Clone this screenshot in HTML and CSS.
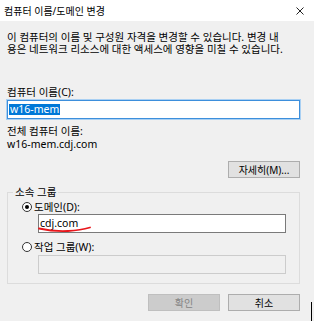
FILE: index.html
```html
<!DOCTYPE html>
<html lang="ko">
<head>
<meta charset="utf-8">
<title>컴퓨터 이름/도메인 변경</title>
<link rel="stylesheet" href="styles.css">
</head>
<body>
<div class="dialog">
  <div class="titlebar">
    <span class="title">컴퓨터 이름/도메인 변경</span>
    <svg class="close" width="8" height="8" viewBox="0 0 8 8"><path d="M0.5 0.5 L7.5 7.5 M7.5 0.5 L0.5 7.5" stroke="#222" stroke-width="1" fill="none"/></svg>
  </div>
  <div class="content">
    <div class="desc">
      <div class="desc-line">이 컴퓨터의 이름 및 구성원 자격을 변경할 수 있습니다. 변경 내</div>
      <div class="desc-line">용은 네트워크 리소스에 대한 액세스에 영향을 미칠 수 있습니다.</div>
    </div>
    <div class="label label-name">컴퓨터 이름(C):</div>
    <div class="textbox focused"><span class="sel">w16-mem</span></div>
    <div class="label label-full">전체 컴퓨터 이름:</div>
    <div class="label label-fullval">w16-mem.cdj.com</div>
    <button class="btn btn-more">자세히(M)...</button>
    <fieldset class="group">
      <legend class="legend">소속 그룹</legend>
      <div class="group-body">
        <div class="radio-row"><span class="radio checked"></span><span>도메인(D):</span></div>
        <div class="textbox indent"><span>cdj.com</span></div>
        <div class="radio-row radio-row-2"><span class="radio"></span><span>작업 그룹(W):</span></div>
        <div class="textbox indent disabled"></div>
      </div>
    </fieldset>
    <div class="buttons">
      <button class="btn disabled-btn">확인</button>
      <button class="btn">취소</button>
    </div>
  </div>
  <svg class="scribble" width="54" height="8" viewBox="0 0 54 8"><path d="M1 3.5 C10 5.5 20 6.5 30 6 C38 5.5 45 4.5 52 2.5" stroke="#e8161b" stroke-width="1.8" fill="none" stroke-linecap="round"/></svg>
  <div class="cursor"></div>
</div>
</body>
</html>
```
FILE: styles.css
```css
* { box-sizing: border-box; }
html, body { margin: 0; padding: 0; }
body {
  width: 314px;
  height: 321px;
  overflow: hidden;
  background: #f0f0f0;
  font-family: "Noto Sans", "Noto Sans CJK KR", sans-serif;
  font-size: 10.5px;
  color: #000;
}
.dialog { position: relative; width: 314px; height: 321px; }
.titlebar {
  height: 21px;
  background: #fff;
  display: flex;
  align-items: center;
  justify-content: space-between;
  padding: 0 10px 0 4px;
}
.title { font-size: 10px; line-height: 10px; }
.close { display: block; }
.content {
  display: flex;
  flex-direction: column;
  padding: 10px 14px 0 7px;
}
.desc { display: flex; flex-direction: column; }
.desc-line { line-height: 12px; white-space: nowrap; }
.label { line-height: 10px; }
.label-name { margin-top: 32px; }
.textbox {
  height: 19px;
  background: #fff;
  border: 1px solid #7a7a7a;
  padding: 0 1px;
  display: flex;
  align-items: center;
  line-height: 11px;
}
.focused {
  margin-top: 3px;
  border-color: #3d8fdc;
  box-shadow: 0 0 0 1px #a9d0f3;
}
.sel { background: #0078d7; color: #fff; padding: 0 1px; line-height: 11px; }
.label-full { margin-top: 7px; }
.label-fullval { margin-top: 3px; }
.btn {
  font-family: inherit;
  font-size: 10px;
  height: 17px;
  width: 72px;
  padding: 0;
  line-height: 10px;
  background: #e1e1e1;
  border: 1px solid #adadad;
  color: #000;
}
.btn-more { align-self: flex-end; margin-top: 12px; }
.group {
  margin: 9px 0 0 0;
  padding: 0 0 0 5px;
  border: 1px solid #dcdcdc;
  min-width: 0;
}
.legend { padding: 0 2px; line-height: 10px; }
.group-body {
  display: flex;
  flex-direction: column;
  padding: 0 13px 9px 9px;
}
.radio-row {
  display: flex;
  align-items: center;
  gap: 2px;
  line-height: 12px;
  margin-top: 4px;
}
.radio-row-2 { margin-top: 8px; }
.radio {
  width: 10px;
  height: 10px;
  border-radius: 50%;
  border: 1px solid #333;
  background: #fff;
  display: flex;
  align-items: center;
  justify-content: center;
}
.radio.checked::after {
  content: "";
  width: 4px;
  height: 4px;
  border-radius: 50%;
  background: #000;
}
.indent { margin-left: 16px; margin-top: 1px; }
.disabled { background: #f0f0f0; border-color: #cccccc; margin-top: 2px; }
.buttons {
  display: flex;
  justify-content: flex-end;
  gap: 8px;
  margin-top: 10px;
}
.disabled-btn { background: #cccccc; border-color: #bfbfbf; color: #838383; }
.scribble { position: absolute; left: 38px; top: 225px; }
.cursor {
  position: absolute;
  left: 311px;
  top: 302px;
  width: 1px;
  height: 19px;
  background: #000;
}
```
